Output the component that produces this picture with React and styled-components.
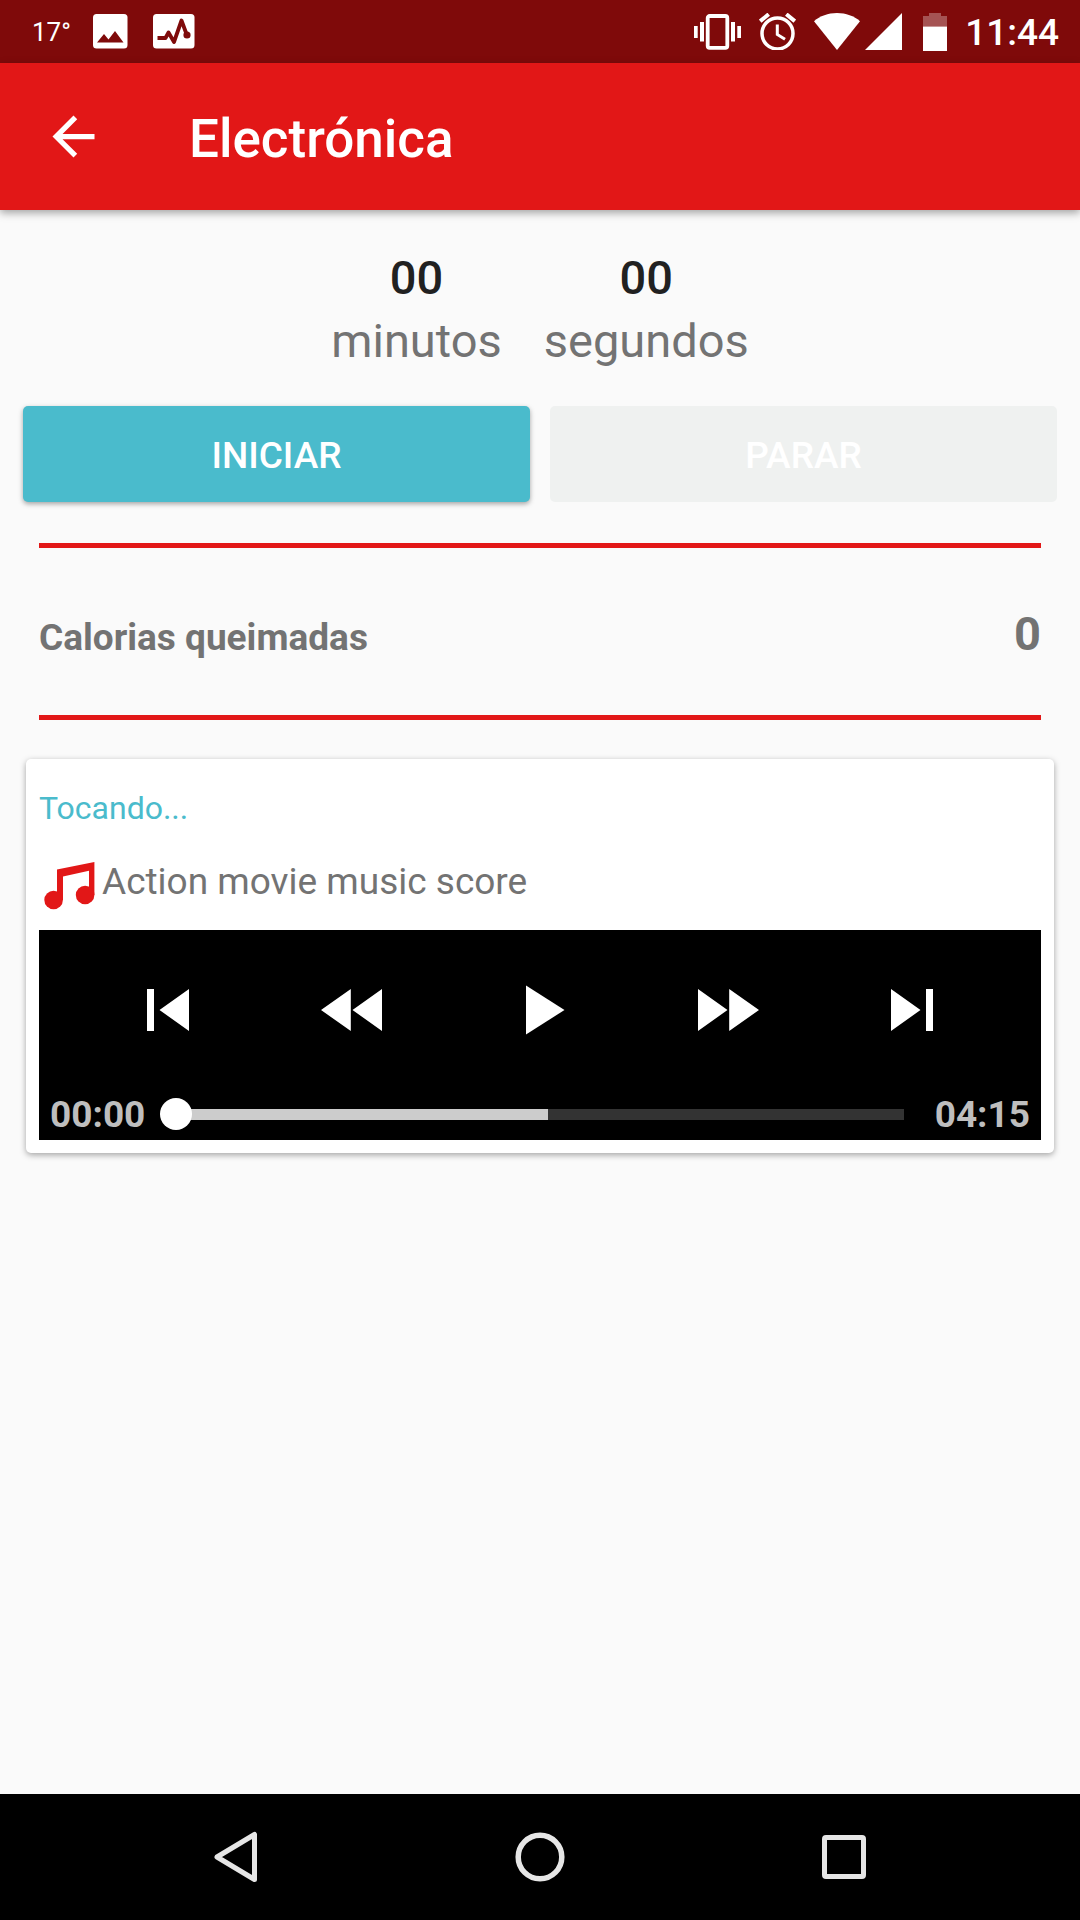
// src/App.jsx
import React, { useState } from 'react';
import styled, { createGlobalStyle } from 'styled-components';

const GlobalStyle = createGlobalStyle`
  * {
    box-sizing: border-box;
  }

  body {
    margin: 0;
    background: #fafafa;
    font-family: Roboto, 'Liberation Sans', sans-serif;
  }

  button {
    font-family: inherit;
    border: none;
    padding: 0;
    cursor: pointer;
  }

  svg {
    display: block;
    flex-shrink: 0;
  }
`;

const Screen = styled.div`
  min-height: 100vh;
  display: flex;
  flex-direction: column;
  color: #737373;
`;

/* --- System status bar --- */
const StatusBar = styled.div`
  height: 63px;
  padding: 0 21px 0 32px;
  display: flex;
  align-items: center;
  justify-content: space-between;
  background: #7f0a0a;
  color: #fff;
`;

const StatusGroup = styled.div`
  display: flex;
  align-items: center;
  gap: ${({ $gap }) => $gap}px;
`;

const Temperature = styled.span`
  width: 36px;
  font-size: 26px;
  line-height: 38px;
`;

const Clock = styled.span`
  padding-top: 2px;
  font-size: 37px;
  font-weight: 500;
  line-height: 43px;
`;

/* --- App bar --- */
const AppBar = styled.header`
  position: relative;
  height: 147px;
  padding: 0 42px;
  display: flex;
  align-items: center;
  gap: 84px;
  background: #e21717;
  color: #fff;
  box-shadow: 0 3px 8px rgba(0, 0, 0, 0.35);
`;

const BackButton = styled.button`
  background: none;
  color: inherit;
`;

const Title = styled.h1`
  margin: 0;
  padding-top: 4px;
  font-size: 53px;
  font-weight: 500;
  line-height: 62px;
`;

const Main = styled.main`
  flex: 1;
  padding-top: 40px;
`;

/* --- Timer --- */
const Timer = styled.div`
  display: flex;
  justify-content: center;
  gap: 42px;
`;

const TimerUnit = styled.div`
  display: flex;
  flex-direction: column;
  align-items: center;
  gap: 8px;
  font-size: 47px;
  line-height: 55px;
`;

const TimerValue = styled.span`
  color: #212121;
  font-weight: 500;
`;

const Actions = styled.div`
  display: flex;
  gap: 20px;
  padding: 0 23px;
  margin-top: 38px;
`;

const ActionButton = styled.button`
  flex: 1;
  height: 96px;
  padding-top: 2px;
  border-radius: 5px;
  background: #4abbcc;
  color: #fff;
  font-size: 37px;
  font-weight: 500;
  box-shadow: 0 2px 5px rgba(0, 0, 0, 0.35);

  &:disabled {
    background: #eff1f0;
    box-shadow: none;
    cursor: default;
  }
`;

/* --- Calories --- */
const Calories = styled.section`
  display: flex;
  align-items: baseline;
  justify-content: space-between;
  margin: 41px 39px 39px;
  padding: 58px 0 54px;
  border-top: 5px solid #e21717;
  border-bottom: 5px solid #e21717;
  font-weight: 700;
`;

const CaloriesLabel = styled.span`
  font-size: 37px;
`;

const CaloriesValue = styled.span`
  font-size: 47px;
  line-height: 55px;
`;

/* --- Player card --- */
const Card = styled.section`
  margin: 0 26px;
  padding: 30px 13px 13px;
  border-radius: 5px;
  background: #fff;
  box-shadow: 0 2px 6px rgba(0, 0, 0, 0.35);
`;

const NowPlaying = styled.p`
  margin: 0 0 27px;
  color: #4abbcc;
  font-size: 32px;
  line-height: 38px;
`;

const Track = styled.div`
  display: flex;
  align-items: flex-start;
  margin-bottom: 13px;
`;

const TrackName = styled.span`
  font-size: 37px;
  line-height: 55px;
`;

const Player = styled.div`
  background: #000;
  padding: 38px 11px 3px;
`;

const Controls = styled.div`
  display: flex;
  justify-content: center;
`;

const ControlButton = styled.button`
  width: 186px;
  display: flex;
  justify-content: center;
  background: none;
  color: #fff;
`;

const Progress = styled.div`
  display: flex;
  align-items: center;
  gap: 15px;
  margin-top: 39px;
`;

const Time = styled.span`
  padding-top: 2px;
  color: #bebebe;
  font-size: 37px;
  font-weight: 700;
  line-height: 44px;
`;

const Seek = styled.input`
  appearance: none;
  flex: 1;
  min-width: 0;
  height: 32px;
  margin: 0;
  /* played/buffered part is light, the rest is dark */
  background: linear-gradient(
      to right,
      transparent 16px,
      #cccccc 16px,
      #cccccc 51%,
      #333333 51%,
      #333333 calc(100% - 16px),
      transparent calc(100% - 16px)
    )
    0 11px / 100% 11px no-repeat;

  &::-webkit-slider-thumb {
    appearance: none;
    width: 32px;
    height: 32px;
    border-radius: 50%;
    background: #fff;
  }
`;

/* --- System navigation bar --- */
const NavBar = styled.nav`
  height: 126px;
  padding: 0 84px;
  display: flex;
  background: #000;
`;

const NavButton = styled.button`
  flex: 1;
  display: flex;
  align-items: center;
  justify-content: center;
  background: none;
  color: #e6e6e6;
`;

const PhotoIcon = () => (
  <svg width="35" height="35" viewBox="0 0 35 35">
    <rect width="34.5" height="34.5" rx="3.5" fill="#fff" />
    <path d="M4 28.5 11 20l4.5 5.5L22 17l8.5 11.5z" fill="#7f0a0a" />
  </svg>
);

const ActivityIcon = () => (
  <svg width="42" height="35" viewBox="0 0 42 35">
    <rect width="41.5" height="34.5" rx="3.5" fill="#fff" />
    <path
      d="M4.5 24H12.5L15.5 18.5 21 28 28.5 6.5 33.5 20"
      fill="none"
      stroke="#7f0a0a"
      strokeWidth="3.8"
      strokeLinejoin="round"
    />
    <circle cx="34" cy="21" r="3.6" fill="#7f0a0a" />
  </svg>
);

const VibrateIcon = () => (
  <svg width="47" height="37" viewBox="0 0 47 37" fill="currentColor">
    <path d="M0 13h3.7v12H0zM6 9h4v19.500H6zM37 9h4v19.500h-4zM43.300 13H47v12h-3.700z" />
    <rect x="13.700" y="3" width="19.600" height="31.800" rx="2" fill="none" stroke="currentColor" strokeWidth="3.800" />
  </svg>
);

const AlarmIcon = () => (
  <svg width="37" height="37" viewBox="0 0 37 37" fill="none" stroke="currentColor">
    <circle cx="18.500" cy="20.500" r="15.500" strokeWidth="3.500" />
    <path d="M18.300 11.500V21.500L26 26.300" strokeWidth="3" />
    <path d="M1.200 8.200 9.700 1.200M35.800 8.200 27.300 1.200" strokeWidth="4" />
  </svg>
);

const WifiIcon = () => (
  <svg width="46" height="37" viewBox="0 0 46 37" fill="currentColor">
    <path d="M23 37 0 8.200C6 3 14 0 23 0s17 3 23 8.200z" />
  </svg>
);

const SignalIcon = () => (
  <svg width="37" height="37" viewBox="0 0 37 37" fill="currentColor">
    <path d="M0 37 37 0v37z" />
  </svg>
);

const BatteryIcon = () => (
  <svg width="24" height="38" viewBox="0 0 24 38" fill="currentColor">
    <path d="M6 0h12v3h6v10.500H0V3h6z" opacity="0.3" />
    <path d="M0 13.500h24V38H0z" />
  </svg>
);

const ArrowBackIcon = () => (
  <svg width="63" height="63" viewBox="0 0 24 24" fill="currentColor">
    <path d="M20 11H7.830l5.590-5.590L12 4l-8 8 8 8 1.410-1.410L7.830 13H20v-2z" />
  </svg>
);

const MusicIcon = () => (
  <svg width="63" height="63" viewBox="0 0 63 63" fill="#e21717">
    <path d="M18 15.500 55.400 8V41H50V16.800L24 22.500V46H18z" />
    <circle cx="14.600" cy="46" r="9.300" />
    <circle cx="46.100" cy="41" r="9.300" />
  </svg>
);

const controls = [
  { label: 'Anterior', path: 'M21 21h7v42h-7zM63 21v42L33.500 42z' },
  { label: 'Retroceder', path: 'M38.800 21v42L9 42zM70 21v42L40.500 42z' },
  { label: 'Reproduzir', path: 'M28 17.500v49L66.500 42z' },
  { label: 'Avançar', path: 'M14 21v42l29.500-21zM45.200 21v42L75 42z' },
  { label: 'Próxima', path: 'M21 21v42l29.500-21zM56 21h7v42h-7z' },
];

const App = () => {
  const [position, setPosition] = useState(0);

  return (
    <Screen>
      <GlobalStyle />

      <StatusBar>
        <StatusGroup $gap={25}>
          <Temperature>17°</Temperature>
          <PhotoIcon />
          <ActivityIcon />
        </StatusGroup>
        <StatusGroup $gap={18}>
          <StatusGroup $gap={21}>
            <StatusGroup $gap={18}>
              <VibrateIcon />
              <AlarmIcon />
              <StatusGroup $gap={5}>
                <WifiIcon />
                <SignalIcon />
              </StatusGroup>
            </StatusGroup>
            <BatteryIcon />
          </StatusGroup>
          <Clock>11:44</Clock>
        </StatusGroup>
      </StatusBar>

      <AppBar>
        <BackButton aria-label="Voltar">
          <ArrowBackIcon />
        </BackButton>
        <Title>Electrónica</Title>
      </AppBar>

      <Main>
        <Timer>
          <TimerUnit>
            <TimerValue>00</TimerValue>
            <span>minutos</span>
          </TimerUnit>
          <TimerUnit>
            <TimerValue>00</TimerValue>
            <span>segundos</span>
          </TimerUnit>
        </Timer>

        <Actions>
          <ActionButton>INICIAR</ActionButton>
          <ActionButton disabled>PARAR</ActionButton>
        </Actions>

        <Calories>
          <CaloriesLabel>Calorias queimadas</CaloriesLabel>
          <CaloriesValue>0</CaloriesValue>
        </Calories>

        <Card>
          <NowPlaying>Tocando...</NowPlaying>
          <Track>
            <MusicIcon />
            <TrackName>Action movie music score</TrackName>
          </Track>

          <Player>
            <Controls>
              {controls.map(({ label, path }) => (
                <ControlButton key={label} aria-label={label}>
                  <svg width="84" height="84" viewBox="0 0 84 84" fill="currentColor">
                    <path d={path} />
                  </svg>
                </ControlButton>
              ))}
            </Controls>
            <Progress>
              <Time>00:00</Time>
              <Seek
                type="range"
                min="0"
                max="255"
                value={position}
                onChange={(e) => setPosition(Number(e.target.value))}
                aria-label="Posição da música"
              />
              <Time>04:15</Time>
            </Progress>
          </Player>
        </Card>
      </Main>

      <NavBar>
        <NavButton aria-label="Voltar">
          <svg width="50" height="54" viewBox="0 0 50 54" fill="none" stroke="currentColor" strokeWidth="5" strokeLinejoin="round">
            <path d="M43.500 4.500v45L6 27z" />
          </svg>
        </NavButton>
        <NavButton aria-label="Início">
          <svg width="50" height="50" viewBox="0 0 50 50" fill="none" stroke="currentColor" strokeWidth="5.500">
            <circle cx="25" cy="25" r="21.800" />
          </svg>
        </NavButton>
        <NavButton aria-label="Recentes">
          <svg width="44" height="44" viewBox="0 0 44 44" fill="none" stroke="currentColor" strokeWidth="5">
            <rect x="2.500" y="2.500" width="39" height="39" rx="1.500" />
          </svg>
        </NavButton>
      </NavBar>
    </Screen>
  );
};

export default App;
